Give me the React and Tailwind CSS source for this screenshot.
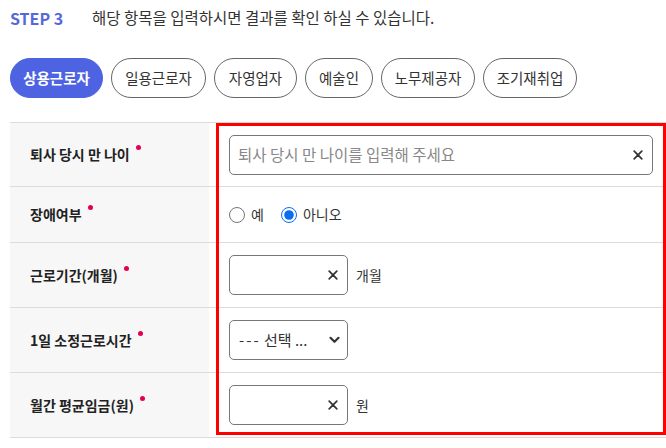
import React, { useState } from 'react';

const font = { fontFamily: '"Noto Sans CJK KR", "Noto Sans", sans-serif' };

const tabs = [
  { name: '상용근로자', w: 'w-[93px]' },
  { name: '일용근로자', w: 'w-[95px]' },
  { name: '자영업자', w: 'w-[83px]' },
  { name: '예술인', w: 'w-[68px]' },
  { name: '노무제공자', w: 'w-[94px]' },
  { name: '조기재취업', w: 'w-[94px]' },
];

// 입력창 지우기 아이콘
const ClearIcon = () => (
  <svg width="10" height="10" viewBox="0 0 10 10" className="shrink-0">
    <path d="M1.2 1.2 L8.8 8.8 M8.8 1.2 L1.2 8.8" stroke="#333" strokeWidth="1.7" strokeLinecap="round" />
  </svg>
);

const Dot = () => <span className="inline-block w-[5px] h-[5px] rounded-full bg-[#e4004f] ml-[6px] -translate-y-[7px]"></span>;

const Row = ({ label, h, children }) => (
  <div className={`flex border-b border-[#dcdcdc] ${h}`}>
    <div className="w-[199px] shrink-0 bg-[#f7f7f7] flex items-center pl-[20px] text-[14px] font-bold text-[#222]">
      <span>{label}</span>
      <Dot />
    </div>
    <div className="flex-1 flex items-center pl-[20px] pr-[13px]">{children}</div>
  </div>
);

const SmallInput = ({ unit }) => (
  <div className="flex items-center">
    <div className="w-[119px] h-[40px] border border-[#777] rounded-[5px] flex items-center justify-end pr-[9px]">
      <ClearIcon />
    </div>
    <span className="ml-[8px] text-[14px] text-[#333]">{unit}</span>
  </div>
);

export default function App() {
  const [tab, setTab] = useState(0);
  const [disabled, setDisabled] = useState('no');

  return (
    <div className="w-[666px] h-[448px] bg-white overflow-hidden" style={font}>
      <div className="flex items-center pl-[10px] pt-[8px] h-[28px]">
        <span className="text-[16px] font-bold text-[#5468d9] w-[82px]">STEP 3</span>
        <span className="text-[15.5px] text-[#333]">해당 항목을 입력하시면 결과를 확인 하실 수 있습니다.</span>
      </div>

      <div className="flex gap-[8px] pl-[10px] mt-[30px]">
        {tabs.map((t, i) => (
          <button
            key={t.name}
            onClick={() => setTab(i)}
            className={`${t.w} h-[40px] rounded-full text-[14.5px] ${i === tab ? 'bg-[#4e63e2] text-white font-bold border border-[#4e63e2]' : 'bg-white text-[#333] border border-[#666]'}`}
          >
            {t.name}
          </button>
        ))}
      </div>

      <div className="relative ml-[10px] mt-[24px] border-t border-[#dcdcdc]">
        <Row label="퇴사 당시 만 나이" h="h-[64px]">
          <div className="flex-1 h-[40px] border border-[#777] rounded-[5px] flex items-center justify-between pl-[8px] pr-[9px]">
            <span className="text-[15.5px] text-[#888]">퇴사 당시 만 나이를 입력해 주세요</span>
            <ClearIcon />
          </div>
        </Row>
        <Row label="장애여부" h="h-[56px]">
          <label className="flex items-center text-[14px] text-[#333]">
            <input type="radio" name="dis" checked={disabled === 'yes'} onChange={() => setDisabled('yes')} className="w-[16px] h-[16px] m-0 accent-[#0a6cf0]" />
            <span className="ml-[6px]">예</span>
          </label>
          <label className="flex items-center text-[14px] text-[#333] ml-[17px]">
            <input type="radio" name="dis" checked={disabled === 'no'} onChange={() => setDisabled('no')} className="w-[16px] h-[16px] m-0 accent-[#0a6cf0]" />
            <span className="ml-[6px]">아니오</span>
          </label>
        </Row>
        <Row label="근로기간(개월)" h="h-[65px]">
          <SmallInput unit="개월" />
        </Row>
        <Row label="1일 소정근로시간" h="h-[65px]">
          <div className="w-[119px] h-[40px] border border-[#777] rounded-[5px] flex items-center justify-between pl-[9px] pr-[7px]">
            <span className="text-[15px] text-[#333]"><span className="tracking-[2px]">---</span> 선택 ...</span>
            <svg width="11" height="8" viewBox="0 0 11 8">
              <path d="M1.5 1.8 L5.5 5.8 L9.5 1.8" stroke="#333" strokeWidth="2.2" fill="none" strokeLinecap="round" strokeLinejoin="round" />
            </svg>
          </div>
        </Row>
        <Row label="월간 평균임금(원)" h="h-[65px]">
          <SmallInput unit="원" />
        </Row>

        {/* 강조 표시 */}
        <div className="absolute left-[206px] top-[0px] w-[450px] h-[312px] border-[3px] border-[#ff0000] pointer-events-none"></div>
      </div>
    </div>
  );
}
